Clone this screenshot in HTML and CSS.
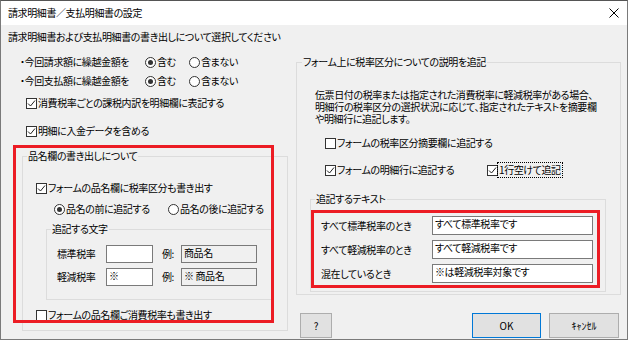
FILE: index.html
```html
<!DOCTYPE html>
<html lang="ja">
<head>
    <meta charset="UTF-8">
    <title>請求明細書／支払明細書の設定</title>
    <link rel="stylesheet" href="styles.css">
</head>
<body>
    <div class="window">
        <div class="titlebar">
            <span class="title">請求明細書／支払明細書の設定</span>
            <svg class="close" width="10" height="10" viewBox="0 0 10 10"><path d="M0.5 0.5L9.5 9.5M9.5 0.5L0.5 9.5" stroke="#000" stroke-width="1"/></svg>
        </div>
        <div class="content">
            <div class="left">
                <p class="intro">請求明細書および支払明細書の書き出しについて選択してください</p>
                <div class="opt-row">
                    <span class="opt-label">・今回請求額に繰越金額を</span>
                    <span class="radio on"><span class="dot"></span>含む</span>
                    <span class="radio"><span class="dot"></span>含まない</span>
                </div>
                <div class="opt-row second">
                    <span class="opt-label">・今回支払額に繰越金額を</span>
                    <span class="radio on"><span class="dot"></span>含む</span>
                    <span class="radio"><span class="dot"></span>含まない</span>
                </div>
                <div class="check tax-check"><span class="box"><svg width="9" height="9" viewBox="0 0 9 9"><path d="M1 4.5L3.5 7L8 1.5" fill="none" stroke="#222" stroke-width="1"/></svg></span>消費税率ごとの課税内訳を明細欄に表記する</div>
                <div class="check pay-check"><span class="box"><svg width="9" height="9" viewBox="0 0 9 9"><path d="M1 4.5L3.5 7L8 1.5" fill="none" stroke="#222" stroke-width="1"/></svg></span>明細に入金データを含める</div>

                <div class="group name-group">
                    <span class="group-title">品名欄の書き出しについて</span>
                    <div class="check name-check"><span class="box"><svg width="9" height="9" viewBox="0 0 9 9"><path d="M1 4.5L3.5 7L8 1.5" fill="none" stroke="#222" stroke-width="1"/></svg></span>フォームの品名欄に税率区分も書き出す</div>
                    <div class="pos-row">
                        <span class="radio on"><span class="dot"></span>品名の前に追記する</span>
                        <span class="radio"><span class="dot"></span>品名の後に追記する</span>
                    </div>
                    <div class="group char-group">
                        <span class="group-title">追記する文字</span>
                        <div class="char-row">
                            <span class="char-label">標準税率</span>
                            <span class="field small"></span>
                            <span class="eg">例:</span>
                            <span class="field readonly">商品名</span>
                        </div>
                        <div class="char-row">
                            <span class="char-label">軽減税率</span>
                            <span class="field small">※</span>
                            <span class="eg">例:</span>
                            <span class="field readonly">※ 商品名</span>
                        </div>
                    </div>
                    <div class="check rate-check"><span class="box"></span>フォームの品名欄ご消費税率も書き出す</div>
                </div>
                <div class="highlight"></div>
            </div>

            <div class="right">
                <div class="group info-group">
                    <span class="group-title">フォーム上に税率区分についての説明を追記</span>
                    <p class="desc">伝票日付の税率または指定された消費税率に軽減税率がある場合、<br>明細行の税率区分の選択状況に応じて、指定されたテキストを摘要欄<br>や明細行に追記します。</p>
                    <div class="check memo-check"><span class="box"></span>フォームの税率区分摘要欄に追記する</div>
                    <div class="line-row">
                        <div class="check line-check"><span class="box"><svg width="9" height="9" viewBox="0 0 9 9"><path d="M1 4.5L3.5 7L8 1.5" fill="none" stroke="#222" stroke-width="1"/></svg></span>フォームの明細行に追記する</div>
                        <div class="check"><span class="box"><svg width="9" height="9" viewBox="0 0 9 9"><path d="M1 4.5L3.5 7L8 1.5" fill="none" stroke="#222" stroke-width="1"/></svg></span><span class="focus">1行空けて追記</span></div>
                    </div>
                    <div class="group text-group">
                        <span class="group-title">追記するテキスト</span>
                        <div class="mark">
                            <div class="text-row">
                                <span class="text-label">すべて標準税率のとき</span>
                                <span class="field wide">すべて標準税率です</span>
                            </div>
                            <div class="text-row">
                                <span class="text-label">すべて軽減税率のとき</span>
                                <span class="field wide">すべて軽減税率です</span>
                            </div>
                            <div class="text-row">
                                <span class="text-label">混在しているとき</span>
                                <span class="field wide">※は軽減税率対象です</span>
                            </div>
                        </div>
                    </div>
                </div>
                <div class="buttons">
                    <button class="btn help">?</button>
                    <button class="btn ok">OK</button>
                    <button class="btn cancel">ｷｬﾝｾﾙ</button>
                </div>
            </div>
        </div>
    </div>
</body>
</html>
```

FILE: styles.css
```css
* { box-sizing: border-box; }
body { margin: 0; font-family: "Noto Sans CJK JP", "Noto Sans", sans-serif; font-size: 10px; line-height: 12px; letter-spacing: -0.4px; color: #000; background: #fff; font-feature-settings: "palt"; }
p { margin: 0; }

.window { width: 628px; height: 340px; border: 1px solid #7a7a7a; border-top-color: #555; background: #f0f0f0; display: flex; flex-direction: column; }
.titlebar { height: 24px; flex: none; background: #fff; display: flex; align-items: center; justify-content: space-between; padding: 0 8px 0 7px; }
.close { display: block; }

.content { flex: 1; display: flex; }
.left { width: 295px; flex: none; padding: 6px 0 0 7px; position: relative; }
.right { flex: 1; padding-top: 37px; }

.opt-row { display: flex; align-items: center; height: 12px; margin-top: 13px; padding-left: 12px; }
.opt-row.second { margin-top: 7px; }
.opt-label { width: 125px; }
.opt-row .radio { width: 44px; }

.radio, .check { display: flex; align-items: center; height: 12px; white-space: nowrap; }
.dot { width: 11px; height: 11px; border: 1px solid #333; border-radius: 50%; background: #fff; display: flex; align-items: center; justify-content: center; margin-right: 1px; flex: none; }
.radio.on .dot::after { content: ""; width: 5px; height: 5px; border-radius: 50%; background: #333; }
.box { width: 11px; height: 11px; border: 1px solid #333; background: #fff; display: flex; align-items: center; justify-content: center; margin-right: 1px; flex: none; }
.box svg { display: block; }

.tax-check { margin: 10px 0 0 18px; }
.pay-check { margin: 16px 0 0 18px; }

.group { border: 1px solid #dcdcdc; }
.group-title { display: inline-block; vertical-align: top; margin: -7px 0 0 4px; padding: 0 1px; background: #f0f0f0; line-height: 12px; }

.name-group { width: 266px; margin: 19px 0 0 14px; padding-bottom: 9px; }
.name-check { margin: 13px 0 0 13px; }
.pos-row { display: flex; margin: 9px 0 0 31px; }
.pos-row .radio:first-child { width: 114px; }
.char-group { width: 226px; margin: 14px 0 0 23px; padding: 15px 0 13px 10px; }
.char-group .group-title { display: block; width: max-content; margin: -22px 0 10px -6px; }
.char-row { display: flex; align-items: center; height: 18px; }
.char-row + .char-row { margin-top: 5px; }
.char-label { width: 49px; }
.eg { width: 28px; padding-left: 9px; }
.rate-check { margin: 9px 0 0 13px; }

.field { height: 18px; background: #fff; border: 1px solid #7a7a7a; padding: 1px 2px; line-height: 12px; white-space: nowrap; }
.field.small { width: 47px; }
.field.readonly { width: 76px; background: #f0f0f0; }
.field.wide { width: 161px; height: 19px; }

.highlight { position: absolute; left: 12px; top: 120px; width: 261px; height: 178px; border: 3px solid #ec1c24; }

.info-group { width: 325px; padding-bottom: 2px; }
.info-group > .group-title { margin-left: 5px; }
.desc { margin: 14px 0 0 18px; line-height: 12px; }
.memo-check { margin: 12px 0 0 28px; }
.line-row { display: flex; margin: 15px 0 0 28px; }
.line-check { width: 162px; }
.focus { outline: 1px dotted #000; outline-offset: 1px; }

.text-group { width: 296px; margin: 23px 0 0 13px; padding-bottom: 3px; }
.text-group > .group-title { display: block; width: max-content; }
.mark { width: 289px; margin-top: 5px; border: 3px solid #ec1c24; padding: 3px 4px 2px 7px; display: flex; flex-direction: column; gap: 5px; }
.text-row { display: flex; align-items: center; height: 19px; }
.text-label { width: 111px; }

.buttons { width: 325px; height: 25px; margin-top: 18px; display: flex; padding: 0 2px 0 4px; }
.btn { font: inherit; letter-spacing: 0; height: 25px; background: #e1e1e1; border: 1px solid #adadad; padding: 0; color: #000; }
.help { width: 32px; }
.ok { width: 69px; margin-left: auto; border-color: #0078d7; }
.cancel { width: 70px; margin-left: 8px; }
```
